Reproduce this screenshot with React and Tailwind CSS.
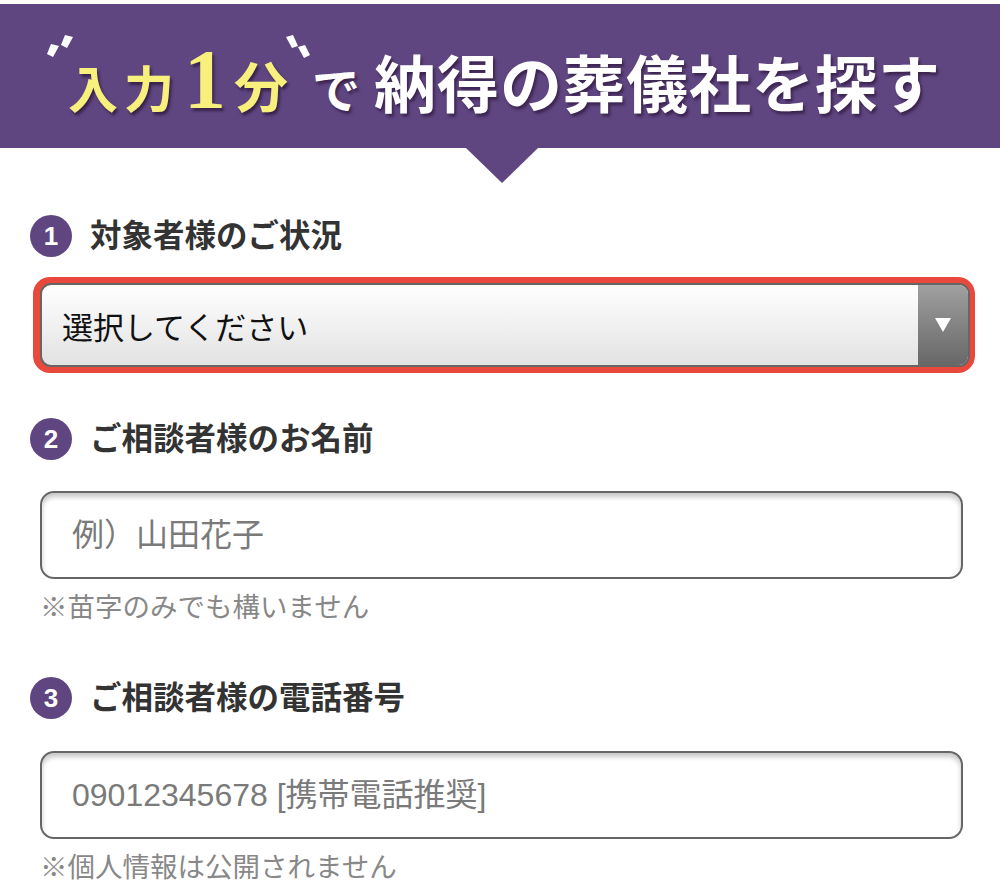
import React from "react";

const JP = { fontFamily: '"Noto Sans CJK JP", "Noto Sans", sans-serif' };
const JPA = { fontFamily: '"Liberation Sans", "Noto Sans CJK JP", sans-serif' };

function QuoteLeft() {
  return (
    <svg width="28" height="24" viewBox="0 0 28 24">
      <polygon points="5,9 13,11 7,22 1,19" fill="#fff" />
      <polygon points="19,0 27,2 21,13 15,10" fill="#fff" />
    </svg>
  );
}

function QuoteRight() {
  return (
    <svg width="28" height="24" viewBox="0 0 28 24">
      <polygon points="1,2 8,0 13,11 7,13" fill="#fff" />
      <polygon points="13,12 20,10 25,20 19,23" fill="#fff" />
    </svg>
  );
}

function Step({ n, children }) {
  return (
    <div className="flex items-center ml-[30px] h-[42px]">
      <div
        className="w-[42px] h-[42px] rounded-full bg-[#604681] text-white flex items-center justify-center text-[26px] font-bold leading-none"
        style={JPA}
      >
        {n}
      </div>
      <div className="ml-[18px] text-[31.5px] font-bold text-[#333] leading-none -mt-[4px]" style={JP}>
        {children}
      </div>
    </div>
  );
}

function TextInput({ children }) {
  return (
    <div className="ml-[40px] w-[923px] h-[88px] rounded-[14px] border-2 border-[#666] bg-white shadow-[inset_0_4px_5px_rgba(0,0,0,0.22)] flex items-center pl-[30px]">
      <span className="text-[32px] text-[#7a7a7a] leading-none" style={JPA}>
        {children}
      </span>
    </div>
  );
}

function Note({ children }) {
  return (
    <div className="ml-[40px] text-[27.5px] text-[#888] leading-[36px]" style={JP}>
      {children}
    </div>
  );
}

export default function App() {
  const ys = "text-[#f8f07c] font-bold leading-none [text-shadow:2px_3px_3px_rgba(30,10,40,0.6)]";
  const ws = "text-white font-bold leading-none [text-shadow:2px_3px_3px_rgba(30,10,40,0.55)]";
  return (
    <div className="w-[1000px] h-[888px] bg-white overflow-hidden" style={JP}>
      <div className="relative mt-[4px] h-[144px] bg-[#604681] flex items-center pl-[68px]">
        <div className="absolute left-[46px] top-[31px]">
          <QuoteLeft />
        </div>
        <div className="absolute left-[285px] top-[31px]">
          <QuoteRight />
        </div>
        <div className="flex items-baseline pt-[8px]">
          <span className={`text-[50px] ${ys}`} style={JP}>入</span>
          <span className={`ml-[6px] text-[50px] ${ys}`} style={JP}>力</span>
          <span
            className={`ml-[10px] text-[84px] ${ys}`}
            style={{ fontFamily: '"Liberation Serif", serif' }}
          >
            1
          </span>
          <span className={`ml-[8px] text-[54px] ${ys}`} style={JP}>分</span>
          <span className={`ml-[24px] text-[48px] ${ws}`} style={JP}>で</span>
          <span className={`ml-[14px] text-[62px] tracking-[1px] ${ws}`} style={JP}>
            納得の葬儀社を探す
          </span>
        </div>
      </div>
      <div className="ml-[466px] w-0 h-0 border-l-[36px] border-r-[36px] border-t-[35px] border-l-transparent border-r-transparent border-t-[#604681]" />

      <div className="mt-[32px]">
        <Step n="1">対象者様のご状況</Step>
      </div>

      <div className="mt-[20px] ml-[33px] w-[942px] h-[96px] rounded-[17px] bg-[#e9483c] pl-[7px] pr-[5px] py-[6px]">
        <div className="h-full rounded-[11px] border-2 border-[#666] overflow-hidden flex bg-gradient-to-b from-[#ffffff] to-[#e2e2e2]">
          <div className="flex-1 flex items-center pl-[20px]">
            <span className="text-[31px] text-[#111] leading-none" style={JP}>
              選択してください
            </span>
          </div>
          <div className="w-[50px] h-full bg-gradient-to-b from-[#a0a0a0] to-[#686868] flex items-center justify-center">
            <svg width="18" height="16" viewBox="0 0 18 16">
              <polygon points="1,1 17,1 9,15" fill="#fff" />
            </svg>
          </div>
        </div>
      </div>

      <div className="mt-[45px]">
        <Step n="2">ご相談者様のお名前</Step>
      </div>
      <div className="mt-[31px]">
        <TextInput>例）山田花子</TextInput>
      </div>
      <div className="mt-[8px]">
        <Note>※苗字のみでも構いません</Note>
      </div>

      <div className="mt-[54px]">
        <Step n="3">ご相談者様の電話番号</Step>
      </div>
      <div className="mt-[32px]">
        <TextInput>09012345678 [携帯電話推奨]</TextInput>
      </div>
      <div className="mt-[8px]">
        <Note>※個人情報は公開されません</Note>
      </div>
    </div>
  );
}
